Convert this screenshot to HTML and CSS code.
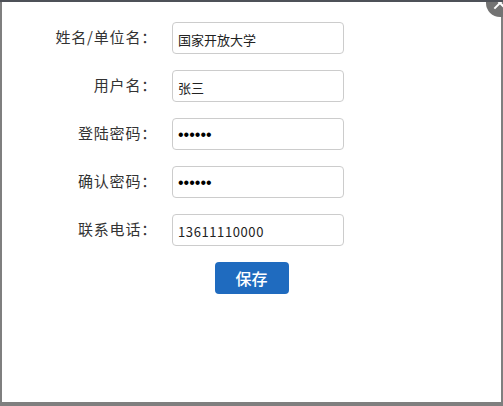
FILE: index.html
```html
<!DOCTYPE html>
<html lang="zh-CN">
<head>
    <meta charset="UTF-8">
    <title>用户信息</title>
    <link rel="stylesheet" href="styles.css">
</head>
<body>
    <div class="layer">
        <span class="layer-close" title="关闭"></span>
        <form class="user-form">
            <div class="form-row">
                <label class="form-label" for="name">姓名/单位名：</label>
                <input class="form-input" id="name" type="text" value="国家开放大学">
            </div>
            <div class="form-row">
                <label class="form-label" for="user">用户名：</label>
                <input class="form-input" id="user" type="text" value="张三">
            </div>
            <div class="form-row">
                <label class="form-label" for="pwd">登陆密码：</label>
                <input class="form-input" id="pwd" type="password" value="123456">
            </div>
            <div class="form-row">
                <label class="form-label" for="pwd2">确认密码：</label>
                <input class="form-input" id="pwd2" type="password" value="123456">
            </div>
            <div class="form-row">
                <label class="form-label" for="tel">联系电话：</label>
                <input class="form-input tel-input" id="tel" type="text" value="13611110000">
            </div>
            <div class="form-actions">
                <button class="btn-save" type="button">保存</button>
            </div>
        </form>
    </div>
</body>
</html>
```

FILE: styles.css
```css
body {
    margin: 0;
    background: #7f7f7f;
    border-top: 2px solid #4e5158;
    font-family: "Noto Sans CJK SC", "Noto Sans", sans-serif;
    color: #333;
    overflow: hidden;
}

.layer {
    position: relative;
    margin: 0 2px;
    height: 400px;
    background: #fff;
}

/* кнопка закрытия поверх угла */
.layer-close {
    position: absolute;
    right: -13px;
    top: -13px;
    width: 28px;
    height: 28px;
    border-radius: 50%;
    background: #737373;
    z-index: 2;
}

.layer-close::before,
.layer-close::after {
    content: '';
    position: absolute;
    left: 6px;
    top: 13px;
    width: 16px;
    height: 2px;
    background: #fff;
    transform: rotate(45deg);
}

.layer-close::after {
    transform: rotate(-45deg);
}

.user-form {
    padding-top: 20px;
}

.form-row {
    display: flex;
    align-items: center;
    margin-bottom: 16px;
}

.form-label {
    width: 155px;
    padding-right: 15px;
    margin-top: -4px;
    text-align: right;
    font-size: 15px;
    letter-spacing: 0.8px;
    color: #333;
}

.form-input {
    box-sizing: border-box;
    width: 172px;
    height: 32px;
    margin: 0;
    padding: 2px 5px 0;
    border: 1px solid #ccc;
    border-radius: 4px;
    font-family: "Noto Sans CJK SC", "Noto Sans", sans-serif;
    font-size: 13px;
    color: #222;
    outline: none;
}

.form-input[type="password"] {
    font-family: "Liberation Sans", sans-serif;
    font-size: 16px;
    color: #000;
}

.tel-input {
    letter-spacing: 0.6px;
}

.form-actions {
    display: flex;
    justify-content: center;
}

.btn-save {
    width: 74px;
    height: 32px;
    border: none;
    border-radius: 4px;
    background: #1f6bbf;
    color: #fff;
    font-family: "Noto Sans CJK SC", sans-serif;
    font-size: 16px;
    font-weight: 500;
    cursor: pointer;
}
```
